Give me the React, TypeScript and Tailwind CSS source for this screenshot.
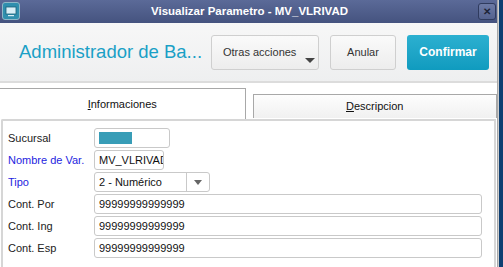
import React from "react";

const font = { fontFamily: '"Liberation Sans", Arial, sans-serif' };

function Row({ label, blue, children }: { label: string; blue?: boolean; children: React.ReactNode }) {
  return (
    <div className="flex items-center h-[20px]">
      <div className={`w-[86px] text-[11px] ${blue ? "text-[#2424e0]" : "text-[#222]"}`}>{label}</div>
      {children}
    </div>
  );
}

function Input({ w, value }: { w: string; value: string }) {
  return (
    <div className={`${w} h-[20px] border border-[#c9c9c9] rounded-[3px] bg-white flex items-center px-[4px] overflow-hidden whitespace-nowrap text-[11px] text-[#111]`}>
      {value}
    </div>
  );
}

export default function App() {
  return (
    <div className="w-[503px] h-[267px] flex overflow-hidden bg-white" style={font}>
      <div className="w-[498px] flex flex-col border-r border-[#a9a9a9]">
        {/* title bar */}
        <div className="h-[23px] relative flex items-center justify-center bg-gradient-to-b from-[#5b6a98] to-[#45537f]">
          <div className="absolute left-[2px] top-[2px] w-[18px] h-[18px] rounded-[3px] border border-[#8fb7c7] bg-[#2f8fae] flex items-center justify-center">
            <svg width="12" height="11" viewBox="0 0 12 11">
              <rect x="1" y="1" width="10" height="7" fill="#d7eef6" stroke="#1b5f78" strokeWidth="0.8" />
              <rect x="3" y="9" width="6" height="1.2" fill="#d7eef6" />
            </svg>
          </div>
          <span className="text-white font-bold text-[11.5px] pl-[2px]">Visualizar Parametro - MV_VLRIVAD</span>
          <div className="absolute right-[1px] top-[3px] w-[18px] h-[17px] rounded-[3px] border border-[#2f3b5e] bg-gradient-to-b from-[#6c7aa5] to-[#55638f] flex items-center justify-center">
            <span className="text-[#1d2438] text-[10px] font-bold leading-none">✕</span>
          </div>
        </div>
        {/* header */}
        <div className="h-[60px] flex items-center bg-gradient-to-b from-[#f7f7f7] to-[#eeeff0] border-b-2 border-[#dcdcdc]">
          <div className="w-[211px] pl-[19px] text-[18.5px] text-[#1aa0c6] whitespace-nowrap">Administrador de Ba...</div>
          <div className="w-[108px] h-[35px] relative border border-[#cfcfcf] rounded-[3px] bg-gradient-to-b from-[#fafafa] to-[#ededed] flex items-center pl-[11px] text-[11px] text-[#333]">
            Otras acciones
            <div className="absolute right-[3px] bottom-[6px] w-0 h-0 border-l-[5px] border-r-[5px] border-t-[5px] border-l-transparent border-r-transparent border-t-[#444]"></div>
          </div>
          <div className="ml-[11px] w-[66px] h-[35px] border border-[#cfcfcf] rounded-[3px] bg-gradient-to-b from-[#fafafa] to-[#ededed] flex items-center justify-center text-[11px] text-[#333]">
            Anular
          </div>
          <div className="ml-[11px] w-[82px] h-[35px] rounded-[3px] bg-gradient-to-b from-[#2bb0d0] to-[#0f9bbf] flex items-center justify-center text-[12px] font-bold text-white">
            Confirmar
          </div>
        </div>
        {/* tabs */}
        <div className="h-[36px] flex items-end pt-[5px]">
          <div className="w-[246px] h-[31px] border-t border-r border-[#a8a8a8] bg-white flex items-center justify-center text-[11px] text-[#111]">
            <span><span className="underline">I</span>nformaciones</span>
          </div>
          <div className="ml-[7px] w-[245px] h-[24px] border-t border-l border-r border-[#a8a8a8] bg-gradient-to-b from-[#fdfdfd] to-[#f1f1f1] flex items-center justify-center text-[11px] text-[#111] mb-[1px]">
            <span><span className="underline">D</span>escripcion</span>
          </div>
        </div>
        {/* panel */}
        <div className="flex-1 ml-[1px] mr-[1px] border-2 border-[#d6d6d6] border-b-0 rounded-tl-[2px] bg-white pt-[7px] pl-[5px] flex flex-col gap-[2px]">
          <Row label="Sucursal">
            <div className="w-[76px] h-[20px] border border-[#c9c9c9] rounded-[3px] bg-white flex items-center pl-[4px]">
              <div className="w-[33px] h-[12px] bg-[#389db7]"></div>
            </div>
          </Row>
          <Row label="Nombre de Var." blue>
            <Input w="w-[70px]" value="MV_VLRIVAD" />
          </Row>
          <Row label="Tipo" blue>
            <div className="w-[116px] h-[20px] border border-[#c9c9c9] rounded-[3px] bg-white flex items-center text-[11px] text-[#111]">
              <div className="flex-1 pl-[4px] whitespace-nowrap">2 - Numérico</div>
              <div className="w-[23px] h-full border-l border-[#c9c9c9] flex items-center justify-center">
                <div className="w-0 h-0 border-l-[4px] border-r-[4px] border-t-[5px] border-l-transparent border-r-transparent border-t-[#666]"></div>
              </div>
            </div>
          </Row>
          <Row label="Cont. Por">
            <Input w="w-[388px]" value="99999999999999" />
          </Row>
          <Row label="Cont. Ing">
            <Input w="w-[388px]" value="99999999999999" />
          </Row>
          <Row label="Cont. Esp">
            <Input w="w-[388px]" value="99999999999999" />
          </Row>
        </div>
      </div>
      <div className="flex-1 bg-[#e8e8e8] flex">
        <div className="w-[1px] bg-[#cfcfcf]"></div>
        <div className="flex-1 bg-[#0d3f72]"></div>
      </div>
    </div>
  );
}
